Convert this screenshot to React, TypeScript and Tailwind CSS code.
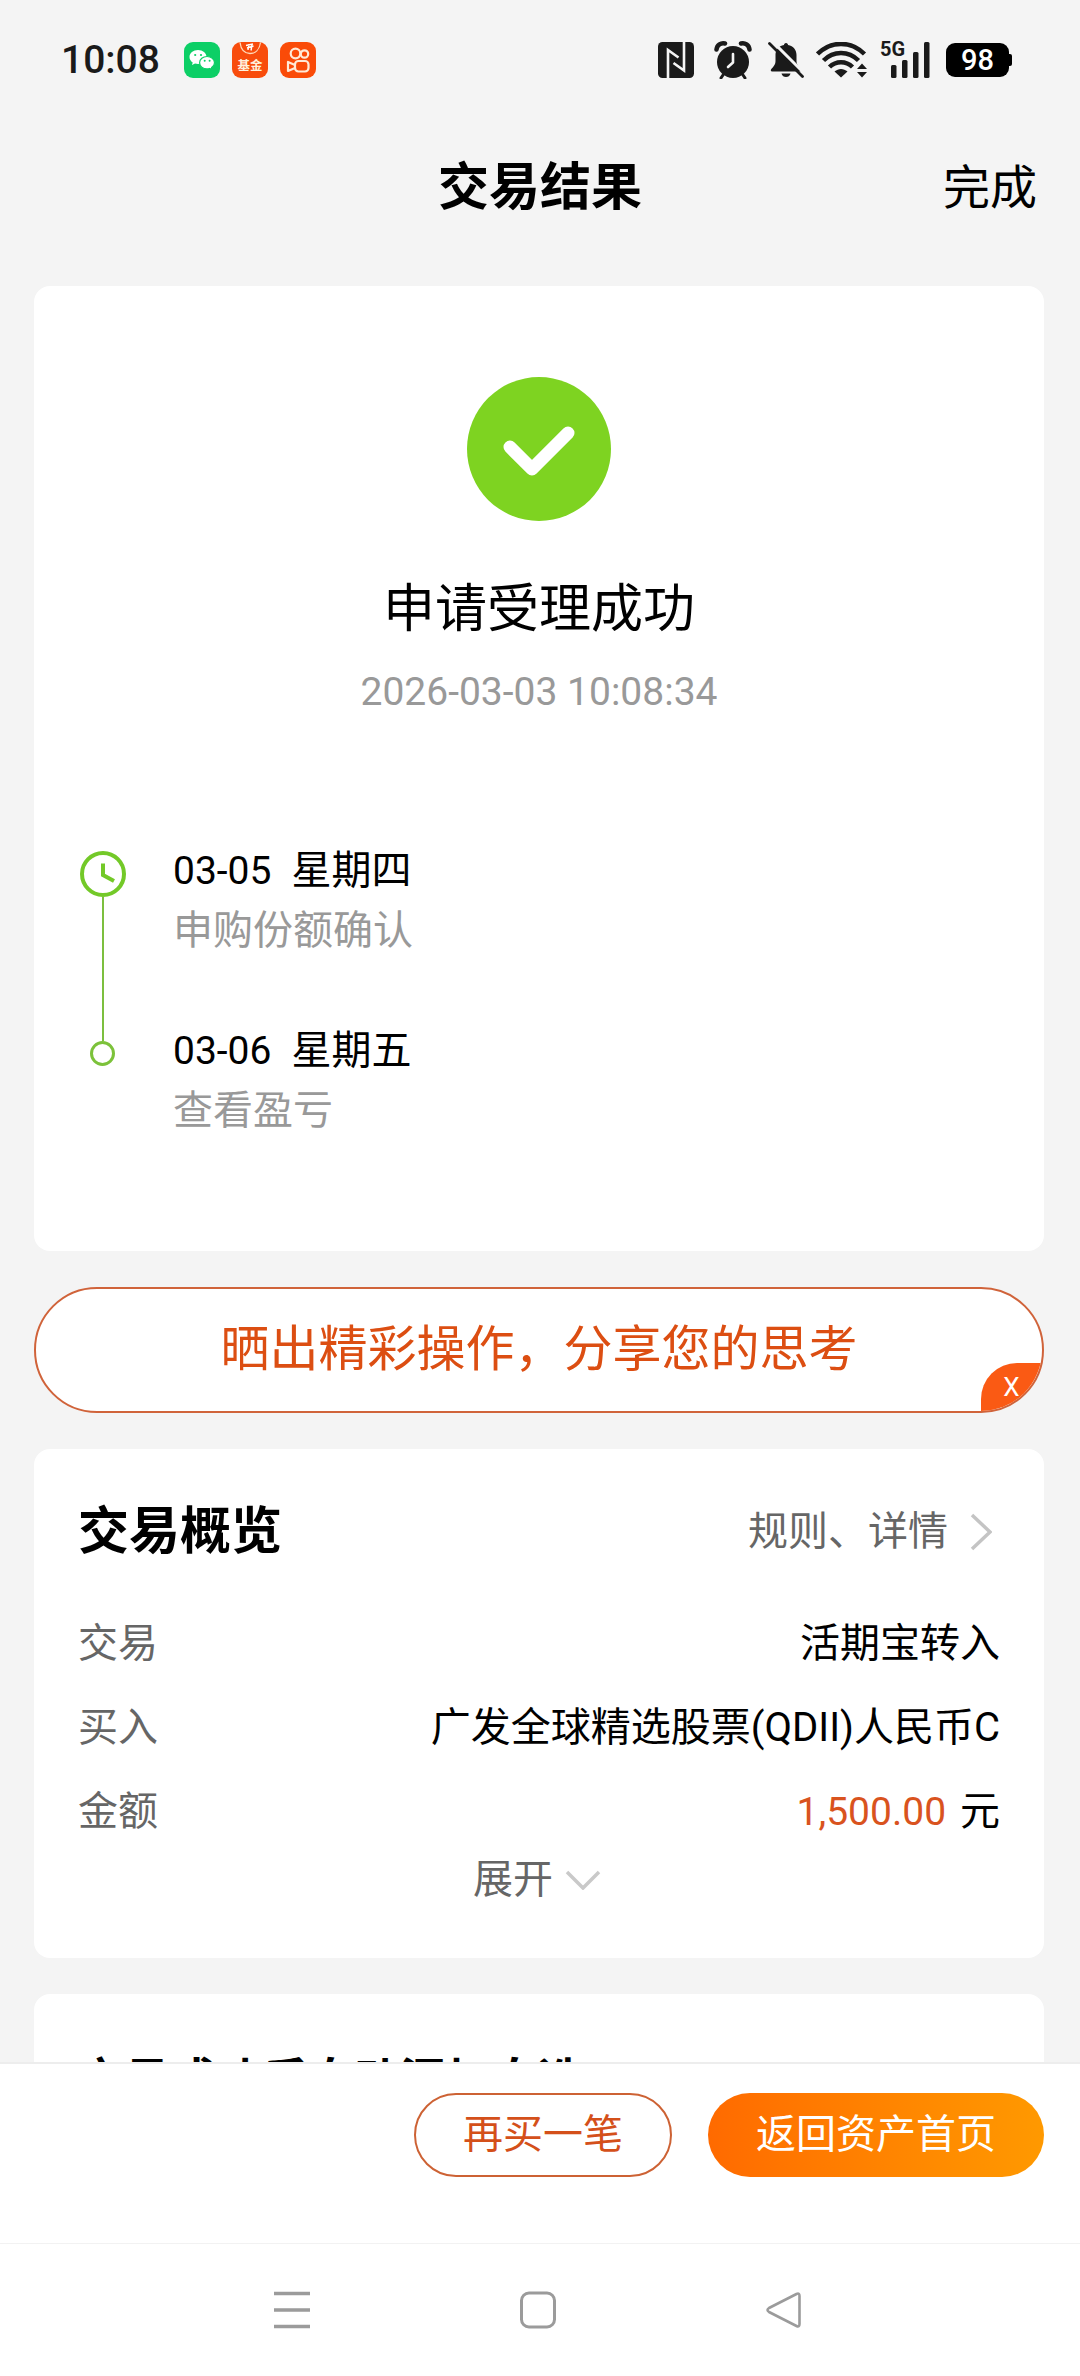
import { useState } from "react";

const STEPS = [
  { date: "03-05", weekday: "星期四", label: "申购份额确认" },
  { date: "03-06", weekday: "星期五", label: "查看盈亏" },
];

export default function App() {
  const [shareVisible, setShareVisible] = useState(true);

  return (
    <div className="flex h-screen flex-col overflow-hidden bg-[#f4f4f4] font-['Roboto','Noto_Sans_CJK_SC',sans-serif] text-[40px] leading-[60px] text-black">
      <StatusBar />

      <header className="grid h-[166px] shrink-0 grid-cols-3 items-center px-[43px] pb-[31px]">
        <h1 className="col-start-2 text-center text-[51px] font-bold">交易结果</h1>
        <button type="button" className="justify-self-end text-[47px]">
          完成
        </button>
      </header>

      <main className="flex min-h-0 flex-1 flex-col gap-9 overflow-hidden pr-9 pl-[34px]">
        <ResultCard />
        {shareVisible && <ShareBanner onClose={() => setShareVisible(false)} />}
        <Overview />
        <section className="shrink-0 rounded-2xl bg-white px-11 pt-14 pb-12">
          <h2 className="text-[46px] font-bold">交易成功后自动添加自选</h2>
        </section>
      </main>

      <div className="flex h-[181px] shrink-0 items-start justify-end gap-9 border-t-2 border-[#ededed] bg-white pt-[29px] pr-9">
        <button
          type="button"
          className="h-[84px] w-[258px] rounded-full border-2 border-[#cd6234] text-[#d4501a]"
        >
          再买一笔
        </button>
        <button
          type="button"
          className="h-[84px] w-[336px] rounded-full bg-linear-to-r from-[#ff6a00] to-[#ff9900] text-white"
        >
          返回资产首页
        </button>
      </div>

      <SystemNav />
    </div>
  );
}

function ResultCard() {
  return (
    <section className="shrink-0 rounded-2xl bg-white px-[45px] pt-[91px] pb-[110px]">
      <div className="flex flex-col items-center">
        <svg viewBox="0 0 144 144" className="size-36" aria-hidden="true">
          <circle cx="72" cy="72" r="72" fill="#7ed321" />
          <path
            d="M43 70 L65 92 L101 56"
            fill="none"
            stroke="#fff"
            strokeWidth="13"
            strokeLinecap="round"
            strokeLinejoin="round"
          />
        </svg>
        <h2 className="mt-[59px] text-[52px]">申请受理成功</h2>
        <time className="mt-[22px] text-[39px] text-[#999]">2026-03-03 10:08:34</time>
      </div>

      <ol className="mt-[119px]">
        {STEPS.map((step, i) => (
          <li key={step.date} className="flex gap-[47px]">
            <div className="flex w-[47px] flex-col items-center">
              {i === 0 ? (
                <>
                  <svg viewBox="0 0 46 46" className="mt-2.5 size-[46px]" fill="none" stroke="#73c928" aria-hidden="true">
                    <circle cx="23" cy="23" r="21" strokeWidth="4" />
                    <path d="M23 12.5 V24 L34 30" strokeWidth="4" />
                  </svg>
                  <span className="w-0.5 flex-1 bg-[#7cbf3f]" />
                </>
              ) : (
                <>
                  <span className="h-5 w-0.5 bg-[#7cbf3f]" />
                  <span className="size-[25px] rounded-full border-3 border-[#7cc23a]" />
                </>
              )}
            </div>
            <div className={i === 0 ? "pb-[60px]" : ""}>
              <p className="flex gap-5">
                <span className="text-[39px]">{step.date}</span>
                <span>{step.weekday}</span>
              </p>
              <p className="text-[#999]">{step.label}</p>
            </div>
          </li>
        ))}
      </ol>
    </section>
  );
}

function ShareBanner({ onClose }: { onClose: () => void }) {
  return (
    <div className="relative h-[126px] shrink-0 overflow-hidden rounded-full border-2 border-[#d0633a] bg-white">
      <button type="button" className="size-full text-[49px] text-[#dc4e12]">
        晒出精彩操作，分享您的思考
      </button>
      <button
        type="button"
        aria-label="关闭"
        onClick={onClose}
        className="absolute right-0 bottom-0 h-12 w-[61px] rounded-tl-[36px] bg-[#fa5a14] text-[26px] leading-[48px] text-white"
      >
        X
      </button>
    </div>
  );
}

function Overview() {
  return (
    <section className="shrink-0 rounded-2xl bg-white px-11 pt-[53px] pb-12">
      <div className="flex items-center justify-between">
        <h2 className="text-[51px] font-bold">交易概览</h2>
        <a href="#rules" className="flex items-center gap-[22px] pr-2 text-[#666]">
          规则、详情
          <svg viewBox="0 0 22 38" className="h-[38px] w-[22px]" fill="none" stroke="#c4c4c4" strokeWidth="3.5" aria-hidden="true">
            <path d="M2 2 L20 19 L2 36" />
          </svg>
        </a>
      </div>

      <dl className="mt-[52px] space-y-6">
        <Row label="交易">活期宝转入</Row>
        <Row label="买入">广发全球精选股票(QDII)人民币C</Row>
        <Row label="金额">
          <span className="mr-1 text-[39px] text-[#d9531e]">1,500.00</span> 元
        </Row>
      </dl>

      <button type="button" className="mx-auto mt-2 flex items-center gap-3 pr-1 text-[#666]">
        展开
        <svg viewBox="0 0 36 20" className="h-5 w-9" fill="none" stroke="#c9c9c9" strokeWidth="3.5" aria-hidden="true">
          <path d="M2 2 L18 18 L34 2" />
        </svg>
      </button>
    </section>
  );
}

function Row({ label, children }: { label: string; children: React.ReactNode }) {
  return (
    <div className="flex justify-between">
      <dt className="text-[#666]">{label}</dt>
      <dd>{children}</dd>
    </div>
  );
}

function StatusBar() {
  return (
    <div className="flex h-[120px] shrink-0 items-center justify-between pr-[68px] pl-[61px] text-[#1a1a1a]">
      <div className="flex items-center gap-3">
        <span className="mr-3 text-[39px] font-medium">10:08</span>
        <WeChatIcon />
        <FundIcon />
        <KuaishouIcon />
      </div>
      <StatusIcons />
    </div>
  );
}

function WeChatIcon() {
  return (
    <svg viewBox="0 0 36 36" className="size-9" aria-hidden="true">
      <rect width="36" height="36" rx="9" fill="#0ccf66" />
      <path d="M14 8 C9.300 8 5.500 11 5.500 15 C5.500 17.300 6.800 19.200 8.700 20.500 L8 23 L11 21.500 C12 21.800 13 22 14 22 C18.700 22 22.500 19 22.500 15 C22.500 11 18.700 8 14 8 Z" fill="#fff" />
      <path d="M23 14.500 C18.900 14.500 15.600 17.200 15.600 20.700 C15.600 24.200 18.900 26.900 23 26.900 C24 26.900 24.900 26.700 25.700 26.500 L28.200 27.800 L27.600 25.600 C29.400 24.400 30.500 22.700 30.500 20.700 C30.500 17.200 27.100 14.500 23 14.500 Z" fill="#fff" stroke="#0ccf66" strokeWidth="1.200" />
      <g fill="#0ccf66">
        <circle cx="11.200" cy="13" r="1.100" />
        <circle cx="17" cy="13" r="1.100" />
        <circle cx="20.700" cy="18.700" r="1" />
        <circle cx="25.600" cy="18.700" r="1" />
      </g>
    </svg>
  );
}

function FundIcon() {
  return (
    <svg viewBox="0 0 36 36" className="size-9" aria-hidden="true">
      <rect width="36" height="36" rx="9" fill="#f84c0c" />
      <path d="M8 0.500 C9 8 13 11.500 18 11.500 C23 11.500 27.500 8 28.500 0.500" fill="none" stroke="#ffd9b8" strokeWidth="1.300" />
      <path d="M14 3.500 L21 2 M15 6 L21.500 4 M17 2 L16 8 M20 3 L19 8.500" stroke="#fff" strokeWidth="1.400" />
      <text x="18" y="28" textAnchor="middle" fontSize="12.500" fontWeight="700" fill="#fff1dd" fontFamily="Noto Sans CJK SC, sans-serif">
        基金
      </text>
    </svg>
  );
}

function KuaishouIcon() {
  return (
    <svg viewBox="0 0 36 36" className="size-9" aria-hidden="true">
      <rect width="36" height="36" rx="9" fill="#fa4b08" />
      <g fill="none" stroke="#ffe9d6" strokeWidth="2.200" strokeLinejoin="round">
        <circle cx="15.500" cy="11.500" r="4.800" />
        <circle cx="24.500" cy="12" r="3.700" />
        <rect x="15" y="19" width="13.500" height="10.500" rx="3.500" />
        <path d="M15 23 L8 20 V29 L15 26" />
      </g>
    </svg>
  );
}

function StatusIcons() {
  return (
    <div className="flex items-center">
      {/* NFC */}
      <svg viewBox="0 0 36 36" className="mr-5 size-9" aria-hidden="true">
        <rect width="36" height="36" rx="4.500" fill="#1a1a1a" />
        <path d="M10 36 V8 L20.500 15.500 M26 0 V28.500 L15.500 21" fill="none" stroke="#f4f4f4" strokeWidth="2.600" />
      </svg>
      {/* alarm */}
      <svg viewBox="0 0 38 38" className="mr-4 size-[38px]" aria-hidden="true">
        <circle cx="19" cy="21" r="16" fill="#1a1a1a" />
        <path d="M2.500 8.500 C3 4 7 1.500 11 2.500 M35.500 8.500 C35 4 31 1.500 27 2.500" fill="none" stroke="#1a1a1a" strokeWidth="4.500" strokeLinecap="round" />
        <path d="M9 34 L7 37 M29 34 L31 37" stroke="#1a1a1a" strokeWidth="3" strokeLinecap="round" />
        <path d="M19 13 V21.500 L14 26" fill="none" stroke="#f4f4f4" strokeWidth="2.600" strokeLinecap="round" strokeLinejoin="round" />
      </svg>
      {/* muted bell */}
      <svg viewBox="0 0 36 36" className="mr-3 size-9" aria-hidden="true">
        <path d="M18 1 C19.300 1 20 2 20 3 C25.500 4 28.500 8 28.500 13 V19 C28.500 23 31.500 25.500 33 27.500 C33.500 28.500 33 29.500 32 29.500 H4 C3 29.500 2.500 28.500 3 27.500 C5 25 7.500 23 7.500 19 V13 C7.500 8 10.500 4 16 3 C16 2 16.700 1 18 1 Z" fill="#1a1a1a" />
        <path d="M13.500 31.500 H22.500 C22 34 20 35 18 35 C16 35 14 34 13.500 31.500 Z" fill="#1a1a1a" />
        <path d="M3.500 -1.500 L37 32" stroke="#f4f4f4" strokeWidth="3" />
        <path d="M1.500 1.500 L34.500 34.500" stroke="#1a1a1a" strokeWidth="2.800" strokeLinecap="round" />
      </svg>
      {/* wifi */}
      <svg viewBox="0 0 52 36" className="mr-3 h-9 w-[52px]" aria-hidden="true">
        <g fill="none" stroke="#1a1a1a" strokeWidth="4.500">
          <path d="M1.500 12 C15 -1.500 35 -1.500 48.500 12" />
          <path d="M7.500 18.500 C17.500 8.500 32.500 8.500 42.500 18.500" />
          <path d="M13.500 25 C20 18.500 30 18.500 36.500 25" />
        </g>
        <path d="M18.500 29.500 C22.500 26 27.500 26 31.500 29.500 L25 35.500 Z" fill="#1a1a1a" />
        <path d="M41 27 L46 21.500 L51 27 Z M41 30 L46 35.500 L51 30 Z" fill="#1a1a1a" />
      </svg>
      {/* signal */}
      <div className="relative mr-4">
        <svg viewBox="0 0 50 38" className="h-[38px] w-[50px]" fill="#1a1a1a" aria-hidden="true">
          <rect x="11" y="24" width="5.500" height="13" rx="1.500" />
          <rect x="22" y="19" width="5.500" height="18" rx="1.500" />
          <rect x="33" y="11" width="5.500" height="26" rx="1.500" />
          <rect x="44" y="1" width="5.500" height="36" rx="1.500" />
        </svg>
        <span className="absolute top-0 left-0 text-[20px] leading-4 font-bold">5G</span>
      </div>
      {/* battery */}
      <div className="flex items-center">
        <span className="flex h-[34px] w-[63px] items-center justify-center rounded-[9px] bg-black text-[29px] leading-[34px] font-medium text-white">
          98
        </span>
        <span className="h-3 w-[3px] rounded-r-[2px] bg-black" />
      </div>
    </div>
  );
}

function SystemNav() {
  return (
    <nav className="flex h-[133px] shrink-0 items-center justify-center gap-[208px] border-t border-[#f2f2f2] bg-white pr-1">
      <button type="button" aria-label="最近任务">
        <svg viewBox="0 0 38 38" className="size-[38px]" stroke="#9b9b9b" strokeWidth="3.500" aria-hidden="true">
          <path d="M1 2.500 H37 M1 19 H37 M1 35.500 H37" />
        </svg>
      </button>
      <button type="button" aria-label="主屏幕">
        <svg viewBox="0 0 38 38" className="size-[38px]" fill="none" stroke="#9b9b9b" strokeWidth="3" aria-hidden="true">
          <rect x="2.500" y="2" width="33" height="34" rx="7.500" />
        </svg>
      </button>
      <button type="button" aria-label="返回">
        <svg viewBox="0 0 38 38" className="size-[38px]" fill="none" stroke="#9b9b9b" strokeWidth="2.600" aria-hidden="true">
          <path d="M31.500 3 Q34.500 1.500 34.500 5 V33 Q34.500 36.500 31.500 35 L4 21 Q1 19 4 17 Z" strokeLinejoin="round" />
        </svg>
      </button>
    </nav>
  );
}
